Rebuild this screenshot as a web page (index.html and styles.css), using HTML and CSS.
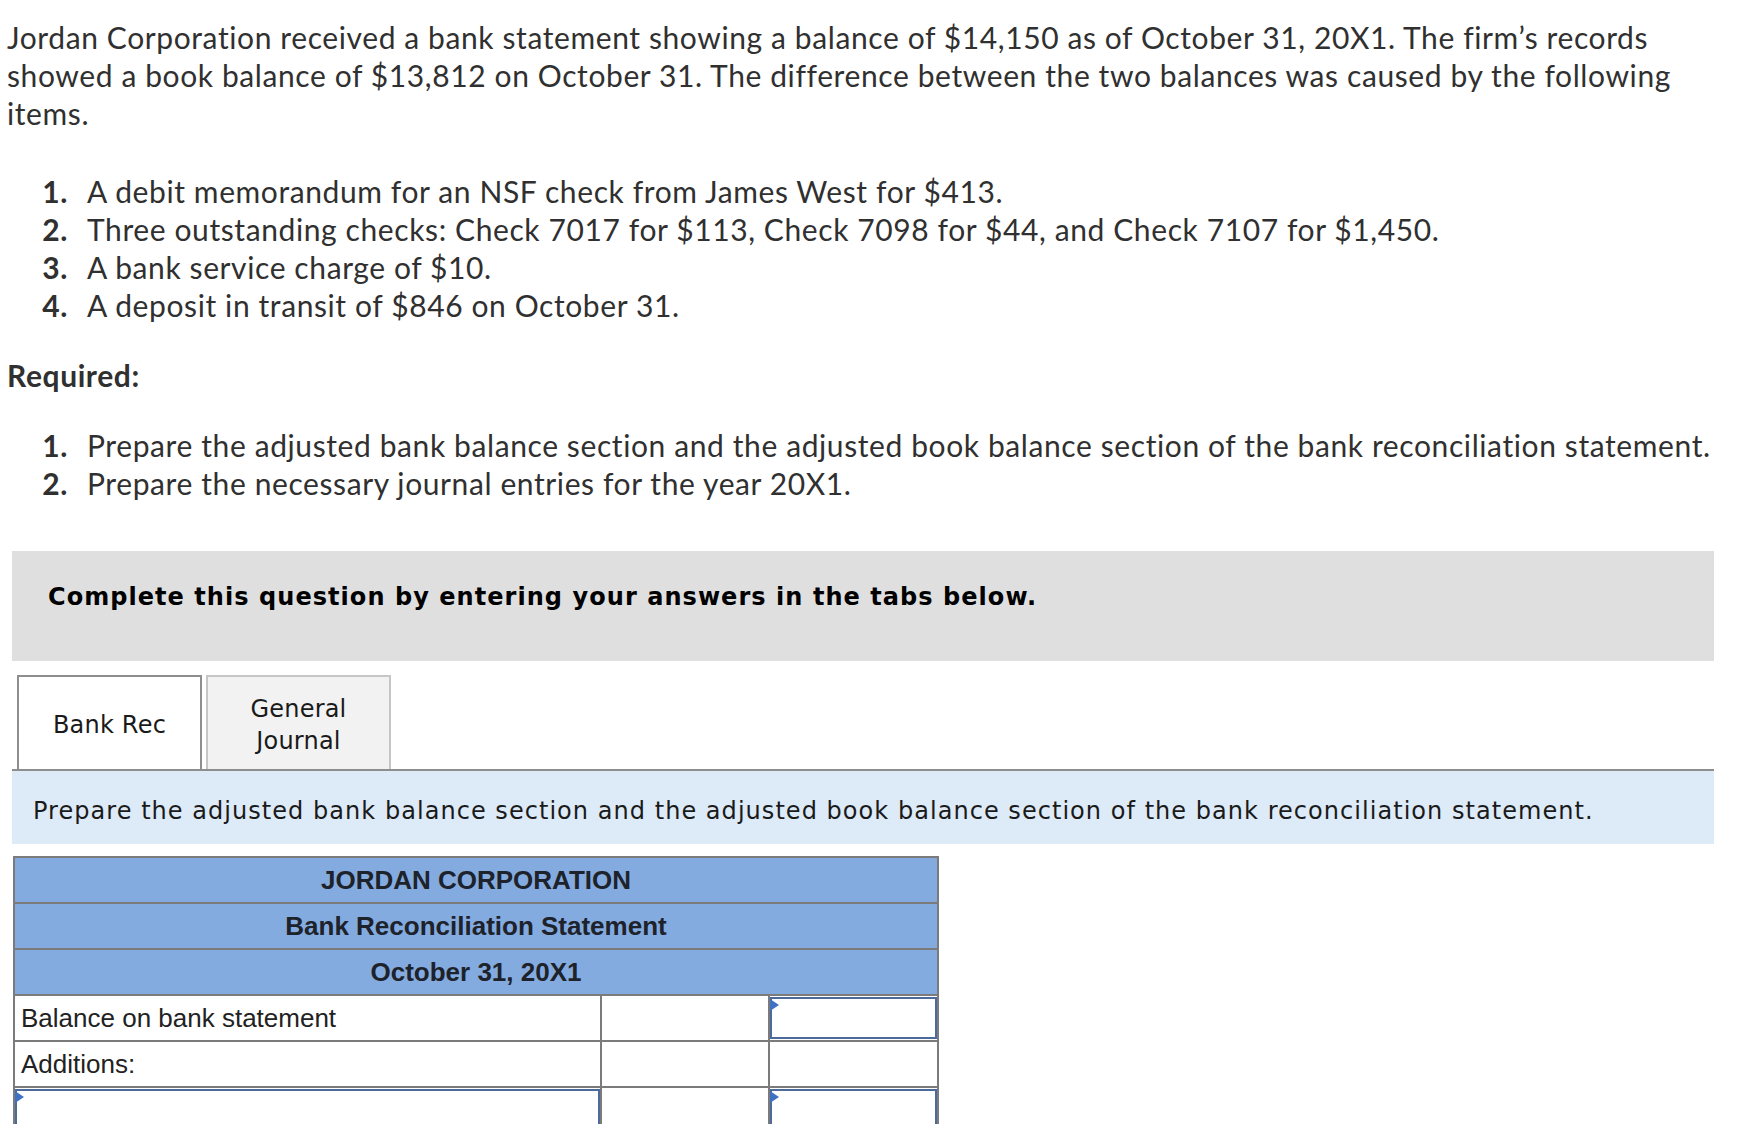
FILE: index.html
```html
<!DOCTYPE html>
<html>
<head>
<meta charset="utf-8">
<title>Bank Reconciliation</title>
<link rel="stylesheet" href="styles.css">
</head>
<body>
<div class="question">
  <p class="intro">Jordan Corporation received a bank statement showing a balance of $14,150 as of October 31, 20X1. The firm’s records showed a book balance of $13,812 on October 31. The difference between the two balances was caused by the following items.</p>
  <ol class="items first">
    <li><span class="num">1.</span><span class="txt">A debit memorandum for an NSF check from James West for $413.</span></li>
    <li><span class="num">2.</span><span class="txt">Three outstanding checks: Check 7017 for $113, Check 7098 for $44, and Check 7107 for $1,450.</span></li>
    <li><span class="num">3.</span><span class="txt">A bank service charge of $10.</span></li>
    <li><span class="num">4.</span><span class="txt">A deposit in transit of $846 on October 31.</span></li>
  </ol>
  <p class="required">Required:</p>
  <ol class="items second">
    <li><span class="num">1.</span><span class="txt">Prepare the adjusted bank balance section and the adjusted book balance section of the bank reconciliation statement.</span></li>
    <li><span class="num">2.</span><span class="txt">Prepare the necessary journal entries for the year 20X1.</span></li>
  </ol>
</div>

<div class="workarea">
  <div class="notice">Complete this question by entering your answers in the tabs below.</div>
  <div class="tabs">
    <div class="tab active">Bank Rec</div>
    <div class="tab">General<br>Journal</div>
  </div>
  <div class="instr">Prepare the adjusted bank balance section and the adjusted book balance section of the bank reconciliation statement.</div>
  <table class="rec">
    <colgroup>
      <col class="c1"><col class="c2"><col class="c3">
    </colgroup>
    <tr class="head"><th colspan="3">JORDAN CORPORATION</th></tr>
    <tr class="head"><th colspan="3">Bank Reconciliation Statement</th></tr>
    <tr class="head"><th colspan="3">October 31, 20X1</th></tr>
    <tr>
      <td class="label">Balance on bank statement</td>
      <td></td>
      <td class="inp"><div class="field"></div></td>
    </tr>
    <tr>
      <td class="label">Additions:</td>
      <td></td>
      <td></td>
    </tr>
    <tr>
      <td class="inp"><div class="field"></div></td>
      <td></td>
      <td class="inp"><div class="field"></div></td>
    </tr>
    <tr>
      <td class="inp"><div class="field"></div></td>
      <td></td>
      <td class="inp"><div class="field"></div></td>
    </tr>
  </table>
</div>
</body>
</html>
```

FILE: styles.css
```css
html, body {
  margin: 0;
  padding: 0;
  background: #ffffff;
}

body {
  padding-top: 18px;
  color: #303030;
  font-family: "Lato", "Liberation Sans", sans-serif;
  font-size: 30px;
  line-height: 38px;
  letter-spacing: 0.6px;
}

.question {
  padding-left: 7px;
  width: 1753px;
}

.intro {
  margin: 0;
  width: 1745px;
}

.items {
  list-style: none;
  margin: 40px 0 0 0;
  padding: 0;
}

.items li {
  display: flex;
  white-space: nowrap;
}

.items .num {
  width: 68px;
  margin-left: -7px;
  margin-right: 19px;
  text-align: right;
  font-weight: 700;
  flex: none;
}

.required {
  margin: 32px 0 0 0;
  font-weight: 700;
}

.items.second {
  margin-top: 32px;
}

.workarea {
  margin: 49px 0 0 12px;
  width: 1702px;
  font-family: "DejaVu Sans", Verdana, sans-serif;
  color: #111111;
  letter-spacing: 0;
}

.notice {
  height: 110px;
  box-sizing: border-box;
  padding: 32px 36px 0;
  background: #dfdfdf;
  font-size: 24px;
  line-height: 28px;
  letter-spacing: 1.05px;
  font-weight: 700;
  color: #000000;
}

.tabs {
  margin-top: 14px;
  display: flex;
  gap: 4px;
  padding-left: 5px;
  border-bottom: 2px solid #8e8e8e;
}

.tab {
  width: 185px;
  height: 94px;
  box-sizing: border-box;
  padding-top: 3px;
  display: flex;
  align-items: center;
  justify-content: center;
  text-align: center;
  font-size: 24px;
  line-height: 32px;
  letter-spacing: 0.2px;
  color: #1a1a1a;
  background: #f2f2f2;
  border: 2px solid #c6c6c6;
  border-bottom: none;
}

.tab.active {
  background: #ffffff;
  border-color: #8e8e8e;
}

.instr {
  height: 73px;
  box-sizing: border-box;
  padding: 26px 0 0 21px;
  background: #ddeaf7;
  font-size: 24px;
  line-height: 28px;
  letter-spacing: 1.04px;
  color: #1a1a1a;
}

.rec {
  margin: 12px 0 0 1px;
  width: 924px;
  border-collapse: collapse;
  table-layout: fixed;
  font-family: "Liberation Sans", Arial, sans-serif;
  font-size: 26px;
  color: #222222;
}

.rec col.c1 { width: 587px; }
.rec col.c2 { width: 168px; }
.rec col.c3 { width: 169px; }

.rec th,
.rec td {
  border: 2px solid #7b7b7b;
  height: 42px;
  padding: 0;
  box-sizing: border-box;
}

.rec tr { height: 46px; }

.rec th {
  background: #83abdf;
  font-weight: 700;
  text-align: center;
  color: #1d222b;
}

.rec td.label {
  padding-left: 6px;
  text-align: left;
}

.rec td.inp {
  position: relative;
  padding: 0;
}

.field {
  position: relative;
  height: 42px;
  box-shadow: inset 0 0 0 2px #4d6a9c;
}

.field::before {
  content: "";
  position: absolute;
  left: 0;
  top: 2px;
  border-top: 6px solid transparent;
  border-bottom: 6px solid transparent;
  border-left: 9px solid #3f72c2;
}
```
